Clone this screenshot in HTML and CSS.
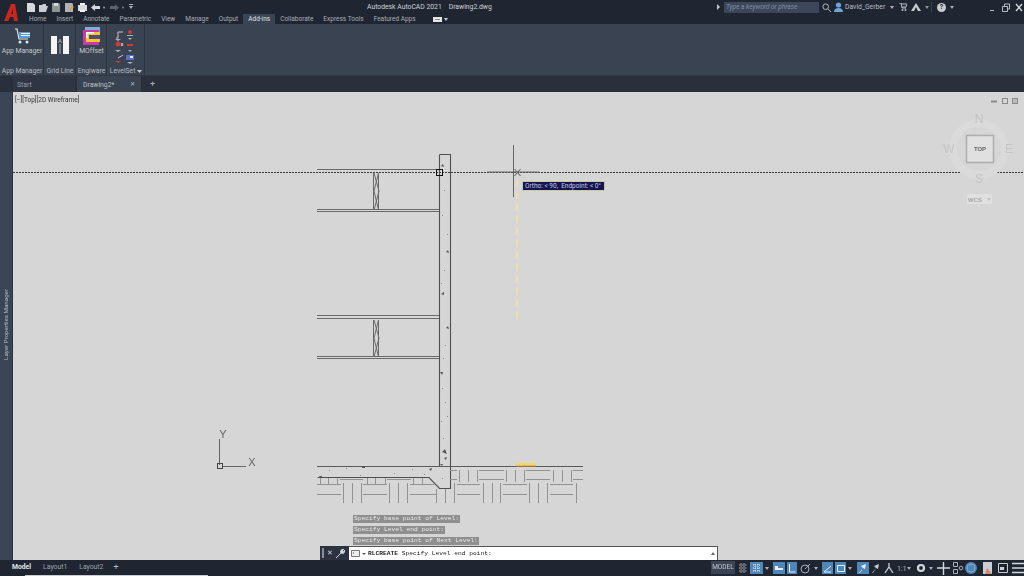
FILE: index.html
```html
<!DOCTYPE html>
<html lang="en">
<head>
<meta charset="utf-8">
<title>Autodesk AutoCAD 2021 - Drawing2.dwg</title>
<link rel="stylesheet" href="styles.css">
</head>
<body>
<div class="app">
  <header class="top">
    <div class="logo"><svg width="14" height="18" viewBox="0 0 14 18"><path d="M0 18 7 1h4l3 17h-4l-.6-4H6l-1.700 4zM7.200 11h1.800L8.500 6z" fill="#c8281e" fill-rule="evenodd"/></svg></div>
    <div class="top-rows">
      <div class="titlerow">
        <div class="qat">
          <svg width="108" height="11" viewBox="0 0 108 11">
            <path d="M0 1h6l2 2v7H0z" fill="#d5d8dc"/>
            <path d="M12 3h3l1-1h3v2h2l-2 6h-7z" fill="#c9ccd0"/>
            <path d="M25 1h7l1 1v8h-8z" fill="#8f949b"/><path d="M27 1h4v3h-4z" fill="#d5d8dc"/>
            <path d="M38 1h7l1 1v8h-8z" fill="#aeb2b7"/><path d="M42 7l4-3 1 1-4 4z" fill="#e0a030"/>
            <path d="M51 3h9v6h-9z" fill="#d5d8dc"/><path d="M53 1h5v2h-5zM53 8h5v2h-5z" fill="#f2f2f2"/>
            <path d="M64 5.500l4-3.500v2h5v3h-5v2z" fill="#d5d8dc"/>
            <circle cx="77" cy="5.500" r="1" fill="#9aa0a8"/>
            <path d="M92 5.500l-4-3.500v2h-5v3h5v2z" fill="#59616d"/>
            <circle cx="96" cy="5.500" r="1" fill="#7a818c"/>
            <path d="M102 2h4v1h-4zM102 4h4l-2 3z" fill="#aeb2b7"/>
          </svg>
        </div>
        <div class="apptitle"><span>Autodesk AutoCAD 2021</span><span>Drawing2.dwg</span></div>
        <div class="toolsright">
          <svg class="sarrow" width="4" height="6" viewBox="0 0 4 6"><path d="M0 0l3 3-3 3z" fill="#c6cad0"/></svg>
          <div class="search">Type a keyword or phrase</div>
          <svg class="ic-s" width="9" height="9" viewBox="0 0 9 9"><circle cx="3.700" cy="3.700" r="2.800" fill="none" stroke="#b7bcc3"/><path d="M6 6l3 3" stroke="#b7bcc3"/></svg>
          <svg class="ic-u" width="9" height="10" viewBox="0 0 9 10"><circle cx="4.500" cy="3" r="2.600" fill="#6ea5da"/><path d="M0 10c0-3 2-4 4.500-4S9 7 9 10z" fill="#6ea5da"/></svg>
          <span class="user">David_Gerber</span>
          <svg class="caret1" width="4" height="3" viewBox="0 0 4 3"><path d="M0 0h4L2 3z" fill="#aab0b8"/></svg>
          <svg class="ic-c" width="8" height="8" viewBox="0 0 8 8"><path d="M0 0h2l1 5h4M2 1h6l-1 3H3" fill="none" stroke="#b7bcc3"/><circle cx="3.500" cy="7" r="1" fill="#b7bcc3"/><circle cx="6.500" cy="7" r="1" fill="#b7bcc3"/></svg>
          <svg class="ic-a" width="10" height="8" viewBox="0 0 10 8"><path d="M5 0l5 8H7L5 4 3 8H0z" fill="#c9ccd0"/></svg>
          <svg class="caret2" width="4" height="3" viewBox="0 0 4 3"><path d="M0 0h4L2 3z" fill="#8f959d"/></svg>
          <i class="sep"></i>
          <div class="help">?</div>
          <svg class="caret3" width="4" height="3" viewBox="0 0 4 3"><path d="M0 0h4L2 3z" fill="#aab0b8"/></svg>
          <svg class="win" width="34" height="9" viewBox="0 0 34 9"><path d="M0 7.500h4" stroke="#b7bcc3"/><path d="M12.500 3.500h5v5h-5zM14.500 3V1h5v5H18" fill="none" stroke="#b7bcc3"/><path d="M26 1l6 7M32 1l-6 7" stroke="#d5d8dc" stroke-width="1.300"/></svg>
        </div>
      </div>
      <nav class="tabs">
        <span class="tab">Home</span><span class="tab">Insert</span><span class="tab">Annotate</span><span class="tab">Parametric</span><span class="tab">View</span><span class="tab">Manage</span><span class="tab">Output</span><span class="tab active">Add-ins</span><span class="tab">Collaborate</span><span class="tab">Express Tools</span><span class="tab">Featured Apps</span>
        <span class="tabicon"><svg width="15" height="5" viewBox="0 0 15 5"><path d="M0 0h9v5H0z" fill="#e4e6e8"/><path d="M2 2h5v1H2z" fill="#8f959d"/><path d="M11 1h4l-2 3z" fill="#c9ccd0"/></svg></span>
      </nav>
    </div>
  </header>

  <section class="ribbon">
    <div class="panel p-app">
      <div class="panel-body">
        <svg width="17" height="17" viewBox="0 0 17 17"><path d="M1 1h2l2 10h9" fill="none" stroke="#e4e6e8" stroke-width="1.200"/><circle cx="6" cy="14" r="1.500" fill="#e4e6e8"/><circle cx="13" cy="14" r="1.500" fill="#e4e6e8"/><path d="M5 4h11v6H5z" fill="#5b9bd0"/><path d="M7 5h9v1H7zM7 7h9v1H7z" fill="#e8f1f7"/></svg>
        <span class="big">App Manager</span>
      </div>
      <span class="ptitle">App Manager</span>
    </div>
    <div class="panel p-grid">
      <div class="panel-body">
        <svg class="gridicon" width="18" height="18" viewBox="0 0 18 18"><path d="M0 0h6v18H0zM12 0h6v18h-6z" fill="#f4f4f4"/><path d="M9 8v10" stroke="#aab0b8"/><text x="9" y="7" text-anchor="middle" class="glyph">A</text></svg>
      </div>
      <span class="ptitle">Grid Line</span>
    </div>
    <div class="panel p-eng">
      <div class="panel-body">
        <svg width="19" height="18" viewBox="0 0 19 18"><path d="M3 0h15v5H3z" fill="#7fb0dc"/><path d="M1 3h16v15H1z" fill="#c83aa8"/><path d="M4 5h14v3H7v4h11v3H4z" fill="#f0c92e"/><path d="M7 8h11v4H7z" fill="#5a4a78"/><path d="M4 5h8v1.500H5.500V11H4z" fill="#fff"/></svg>
        <span class="big">MOffset</span>
      </div>
      <span class="ptitle">Engiware</span>
    </div>
    <div class="panel p-lev">
      <div class="levels">
        <svg width="22" height="36" viewBox="0 0 22 36">
          <g fill="none" stroke="#c4c8ce"><path d="M3 3h5M3 3v6h-2"/><path d="M3 29l5-3"/></g>
          <path d="M0 10h6l-3 2z" fill="#aab0b8"/>
          <circle cx="15" cy="3" r="2" fill="#d23a30"/><path d="M12 6h6v1h-6zM13 9h4l-2 2z" fill="#aab0b8"/>
          <circle cx="3" cy="15" r="2.500" fill="#d23a30"/><path d="M6 14l2 3M8 14l-2 3" stroke="#c4c8ce"/><path d="M0 21h6l-3 2z" fill="#aab0b8"/>
          <path d="M12 15h6v2h-6z" fill="#d23a30"/><path d="M13 21h4l-2 2z" fill="#aab0b8"/>
          <path d="M0 32h6l-3 2z" fill="#d23a30"/>
          <path d="M11 26h8v5h-8z" fill="#5b6fc8"/><path d="M15 27h3v2h-3z" fill="#e8edf5"/><path d="M12 33h6l-3 2z" fill="#aab0b8"/>
        </svg>
      </div>
      <span class="ptitle">LevelSet <svg width="5" height="3" viewBox="0 0 5 3"><path d="M0 0h5L2.500 3z" fill="#c6cad0"/></svg></span>
    </div>
  </section>

  <div class="doctabs">
    <span class="doc">Start</span>
    <span class="doc current">Drawing2*<b>✕</b></span>
    <span class="plus">+</span>
  </div>

  <main class="work">
    <aside class="palette"><span>Layer Properties Manager</span></aside>
    <div class="canvas">
      <svg class="drawing" width="1011" height="468" viewBox="13 92 1011 468">
        <!-- wall -->
        <g fill="none" stroke="#4f4f4f" stroke-width="1.100">
          <path d="M439.500 154.500h11V488.500h-11L429 477.500H317.500"/>
          <path d="M439.500 154.500V466"/>
          <path d="M317 466.500h266" stroke="#5a5a5a"/>
        </g>
        <!-- floors -->
        <g fill="none" stroke="#6a6a6a" stroke-width="1.200">
          <path d="M317 169.500h122M317 209.500h122M317 211.500h122M317 315.500h122M317 318.500h122M317 356.500h122M317 358.500h122"/>
          <path d="M373.500 173v37M378.500 173v37M374 173l5 18-5 19M378.500 173l-4.500 18 4.500 19" stroke-width="1"/>
          <path d="M373.500 320v37M378.500 320v37M374 320l5 18-5 19M378.500 320l-4.500 18 4.500 19" stroke-width="1"/>
        </g>
        <!-- concrete marks -->
        <g fill="#555">
          <path d="M441 166l2-2 1 3zM446 252l2-2 1 3zM441 294l3-2v3zM446 328l2-2 1 3zM440 372l3 0-1 3zM442 452l3-3 2 5zM444 458l3-1-1 3z"/>
          <path d="M362 466h3v2h-3zM429 469l3-1-1 3zM319 476l3 0-1 3zM440 464l3 0-1 2z"/>
        </g>
        <g fill="#8a8a8a">
          <path d="M444 190h1v1h-1zM442 215h1v1h-1zM447 234h1v1h-1zM444 270h1v1h-1zM441 283h1v1h-1zM445 345h1v1h-1zM443 358h1v1h-1zM442 388h1v1h-1zM445 402h1v1h-1zM441 421h1v1h-1zM447 416h1v1h-1zM443 438h1v1h-1zM346 468h1v1h-1zM329 470h1v1h-1zM394 473h1v1h-1zM412 469h1v1h-1zM424 474h1v1h-1zM360 475h1v1h-1zM442 478h1v1h-1zM433 484h1v1h-1z"/>
        </g>
        <!-- hatch -->
        <g fill="none" stroke="#929292" stroke-width="1">
          <path d="M459.500 470v12M468.500 470v12M477.500 470v12M506.500 470v12M515.500 470v12M524.500 470v12M553.500 470v12M562.500 470v12M571.500 470v12"/>
          <path d="M450 470.500h7M479 470.500h25M526 470.500h24M573 470.500h10M450 479.500h7M479 479.500h25M526 479.500h24M573 479.500h10"/>
          <path d="M320.500 478v6M328.500 478v6M337.500 478v6M367.500 478v6M375.500 478v6M385.500 478v6M413.500 478v6M422.500 478v6"/>
          <path d="M340 479.500h23M387 479.500h24"/>
          <path d="M317 484.500h24M363 484.500h24M410 484.500h24M457 484.500h23M503 484.500h24M550 484.500h23M317 494.500h24M363 494.500h24M410 494.500h26M457 494.500h23M503 494.500h24M550 494.500h23"/>
          <path d="M343.500 483v20M352.500 483v20M361.500 483v20M389.500 483v20M398.500 483v20M407.500 483v20M436.500 489v14M445.500 489v14M454.500 483v20M483.500 483v20M492.500 483v20M500.500 483v20M529.500 483v20M538.500 483v20M547.500 483v20M576.500 483v20"/>
        </g>
        <!-- highlight -->
        <path d="M516 463h20v2.500h-20z" fill="#eedc5a"/><path d="M516 466h20" stroke="#e58a4a"/>
        <!-- crosshair guide -->
        <path d="M13 172.500h1011" stroke="#3a3a3a" stroke-dasharray="2 1"/>
        <path d="M487 172h52M513.500 145v52" stroke="#666"/>
        <path d="M514.500 169l6 7M520.500 169l-6 7" stroke="#555"/>
        <rect x="436.500" y="169.500" width="6" height="6" fill="none" stroke="#111"/>
        <path d="M517 179v142" stroke="#eadfa8" stroke-width="2" stroke-dasharray="8 4"/>
        <!-- UCS -->
        <path d="M219.500 439v26M222 466.500h24" stroke="#666"/>
        <rect x="217.500" y="463.500" width="5" height="5" fill="none" stroke="#444"/>
        <text x="223" y="438" class="ucs">Y</text>
        <text x="252" y="466" class="ucs">X</text>
        <!-- compass -->
        <circle cx="979" cy="149" r="26" fill="none" stroke="#dadada" stroke-width="8"/>
        <rect x="966.500" y="135.500" width="27" height="27" fill="#e0e0e0" stroke="#adadad" stroke-width="1.500"/>
        <text x="980" y="151" class="top-t">TOP</text>
        <text x="979" y="123" class="cmp">N</text><text x="949" y="153" class="cmp">W</text><text x="1009" y="153" class="cmp">E</text><text x="979" y="183" class="cmp">S</text>
        <rect x="967" y="194" width="25" height="10" rx="1" fill="#e0e0e0"/>
        <text x="975" y="202" class="wcs">WCS</text><path d="M987 198h4l-2 3z" fill="#c0c0c0"/>
        <!-- viewport controls -->
        <path d="M991 101.500h6" stroke="#8a8a8a" stroke-width="2"/><rect x="1002.500" y="98.500" width="5" height="5" fill="none" stroke="#8a8a8a"/><rect x="1012.500" y="98.500" width="5" height="5" fill="#bcbcbc" stroke="#8a8a8a"/>
      </svg>
      <div class="vplabel">[−][Top][2D Wireframe]</div>
      <div class="tip">Ortho: &lt; 90,&nbsp; Endpoint: &lt; 0°</div>
      <div class="cmdblock">
        <div class="history">
          <span>Specify base point of Level:</span>
          <span>Specify Level end point:</span>
          <span>Specify base point of Next Level:</span>
        </div>
        <div class="cmdline">
          <div class="grip"><i></i><b>✕</b><svg width="9" height="9" viewBox="0 0 9 9"><path d="M0 9l5-5M5 4c-1-2 0-4 3-4L6 2l1 1 2-2c0 3-2 4-4 3z" stroke="#d5d8dc" fill="#d5d8dc"/></svg></div>
          <div class="input">
            <svg width="9" height="7" viewBox="0 0 9 7"><path d="M.5.500h8v6h-8z" fill="#eee" stroke="#777"/><path d="M2 2l1 1-1 1" stroke="#555" fill="none" stroke-width=".6"/></svg>
            <svg class="c" width="4" height="2" viewBox="0 0 4 2"><path d="M0 0h4L2 2z" fill="#555"/></svg>
            <span><b>RLCREATE</b> Specify Level end point:</span>
            <svg class="up" width="4" height="3" viewBox="0 0 4 3"><path d="M0 3h4L2 0z" fill="#666"/></svg>
          </div>
        </div>
      </div>
    </div>
  </main>

  <footer class="status">
    <div class="layouts"><span class="lt on">Model</span><span class="lt">Layout1</span><span class="lt">Layout2</span><span class="lt add">+</span></div>
    <i class="scrub"></i>
    <div class="sright">
      <span class="model">MODEL</span>
      <svg width="313" height="16" viewBox="711 560 313 16">
        <path d="M739 565h8M739 568h8M739 571h8M741 563v10M744 563v10" stroke="#aab0b8" stroke-dasharray="1 .5" fill="none"/>
        <g fill="#4f87b8"><path d="M750 562h13v12h-13zM773 562h12v12h-12zM787 562h10v12h-10zM822 562h11v12h-11zM835 562h11v12h-11zM857 562h12v12h-12z"/><circle cx="971" cy="568" r="6"/></g>
        <path d="M753 565h7M753 568h7M753 571h7M755 564v8M758 564v8" stroke="#e8f1f7" stroke-dasharray="1 1"/>
        <path d="M775 566h3v2h5v2h-8z" fill="#e8f1f7"/><path d="M789.500 564v8h6" stroke="#e8f1f7" fill="none"/><path d="M824 572l7-6M824 572h7" stroke="#e8f1f7" fill="none"/>
        <path d="M837.500 565.500h7v6h-7z" fill="none" stroke="#e8f1f7"/>
        <circle cx="805" cy="569" r="4" fill="none" stroke="#aab0b8"/><path d="M805 569l5-5" stroke="#aab0b8"/>
        <path d="M859 573l4-5-2-2 5-2-1 5-2-1-3 5z" fill="#e8f1f7"/>
        <path d="M872 573l4-5-2-2 5-2-1 5-2-1-3 5z" fill="#c9ccd0"/><path d="M889 563v4M885 573l4-6 4 6" stroke="#c9ccd0" fill="none" stroke-width="1.300"/>
        <g fill="#aab0b8"><path d="M765 567h4l-2 3zM814 567h4l-2 3zM848 567h4l-2 3zM907 567h4l-2 3zM929 567h4l-2 3z"/></g>
        <text x="897" y="571" class="st">1:1</text>
        <circle cx="921" cy="568" r="3" fill="none" stroke="#d5d8dc" stroke-width="2.200"/>
        <path d="M937 568h13M943.500 562v13" stroke="#d5d8dc" stroke-width="1.400"/>
        <path d="M953.500 562.500h4v4h-4zM953.500 569.500h4v4h-4z" fill="none" stroke="#aab0b8"/><circle cx="961" cy="568" r="1.800" fill="none" stroke="#aab0b8"/>
        <circle cx="971" cy="568" r="4" fill="none" stroke="#86a9c8"/>
        <path d="M983 562h9v12h-9z" fill="#c9ccd0"/><path d="M987 568l5 6h-7z" fill="#d08a70"/>
        <path d="M998.500 563.500h9v9h-9z" fill="none" stroke="#c9ccd0"/><path d="M1000 567h4v3h-4z" fill="#c9ccd0"/>
        <path d="M1012 563.500h12M1012 568h12M1012 572.500h12" stroke="#d5d8dc" stroke-width="1.300"/>
      </svg>
    </div>
  </footer>
</div>
</body>
</html>
```

FILE: styles.css
```css
* { box-sizing: border-box; }
html, body { margin: 0; padding: 0; height: 100%; overflow: hidden; }
body { font-family: Roboto, "Liberation Sans", Arial, sans-serif; font-size: 6.800px; color: #c6cad0; background: #1f2633; }
.app { width: 1024px; height: 576px; display: flex; flex-direction: column; position: relative; overflow: hidden; filter: blur(.3px); }

.top { height: 24px; display: flex; background: #1f2632; flex: none; }
.logo { width: 24px; padding: 3px 0 0 4px; flex: none; }
.top-rows { flex: 1; display: flex; flex-direction: column; }
.titlerow { height: 14px; display: flex; align-items: center; position: relative; }
.qat { width: 340px; flex: none; display: flex; margin-left: 3px; }
.apptitle { width: 350px; flex: none; display: flex; gap: 7px; color: #d0d3d8; font-size: 6.800px; }
.toolsright { display: flex; align-items: center; flex: 1; }
.sarrow { margin-right: 3px; }
.search { width: 95px; height: 11px; background: #3c4759; color: #7d8ea6; font-style: italic; font-size: 6.500px; line-height: 11px; padding-left: 2px; }
.ic-s { margin-left: 3px; }
.ic-u { margin-left: 3px; }
.user { margin-left: 2px; width: 42px; color: #b9bec5; white-space: nowrap; }
.caret1 { margin-left: 3px; }
.ic-c { margin-left: 5px; }
.ic-a { margin-left: 4px; }
.caret2 { margin-left: 4px; }
.sep { width: 1px; height: 10px; background: #39414f; margin-left: 2px; }
.help { width: 9px; height: 9px; border-radius: 50%; background: #c9ccd0; color: #1f2632; font-size: 7px; line-height: 9px; text-align: center; font-weight: bold; margin-left: 5px; }
.caret3 { margin-left: 4px; }
.win { margin-left: 36px; }

.tabs { height: 10px; display: flex; align-items: stretch; }
.tab { padding: 0 5px; line-height: 10px; color: #a9aeb6; white-space: nowrap; font-size: 6.500px; }
.tab.active { background: #3b4454; color: #dfe2e6; }
.tabicon { margin-left: 12px; display: flex; align-items: center; }

.ribbon { height: 52px; flex: none; background: #3a4352; display: flex; gap: 1px; padding-left: 1px; border-bottom: 1px solid #2f3744; }
.panel { display: flex; flex-direction: column; align-items: center; border-right: 1px solid #2d3440; }
.panel-body { flex: 1; min-height: 0; display: flex; flex-direction: column; align-items: center; padding-top: 4px; }
.p-app { width: 43px; }
.p-grid { width: 31px; }
.p-grid .panel-body { padding-top: 12px; }
.p-eng { width: 30px; }
.p-eng .panel-body { padding-top: 3px; }
.p-lev { width: 37px; }
.levels { flex: 1; min-height: 0; padding-top: 5px; }
.big { color: #c6cad0; font-size: 6.800px; margin-top: 2px; white-space: nowrap; }
.ptitle { color: #b5bac1; font-size: 6.800px; line-height: 8px; white-space: nowrap; }
.glyph { font: 6px Roboto, sans-serif; fill: #c6cad0; }

.doctabs { height: 16px; flex: none; background: #292f3b; display: flex; align-items: stretch; padding-left: 13px; gap: 2px; }
.doc { width: 62px; padding-left: 4px; line-height: 18px; color: #989ea7; background: #2f3643; font-size: 6.800px; }
.doc.current { width: 64px; padding-left: 6px; background: #3a4352; color: #bcc1c8; display: flex; justify-content: space-between; padding-right: 6px; }
.doc b { font-weight: normal; font-size: 6px; line-height: 16px; }
.plus { margin-left: 7px; line-height: 16px; color: #aab0b8; font-size: 9px; }

.work { flex: 1; display: flex; min-height: 0; }
.palette { width: 13px; flex: none; background: #3a4556; border-right: 1px solid #2b3340; display: flex; align-items: center; justify-content: center; }
.palette span { writing-mode: vertical-rl; transform: rotate(180deg); color: #b5bac1; font-size: 6.200px; white-space: nowrap; position: relative; top: -2px; }
.canvas { flex: 1; background: #d6d6d6; position: relative; overflow: hidden; }
.drawing { display: block; }
.vplabel { position: absolute; left: 2px; top: 4px; font-size: 6.500px; color: #333; }
.ucs { font: 11px "Liberation Sans", sans-serif; fill: #666; text-anchor: middle; }
.top-t { font: bold 6px "Liberation Sans", sans-serif; fill: #666; text-anchor: middle; }
.cmp { font: 12px "Liberation Sans", sans-serif; fill: #c4c4c4; text-anchor: middle; }
.wcs { font: bold 6px "Liberation Sans", sans-serif; fill: #a6a6a6; text-anchor: middle; }
.tip { position: absolute; left: 509px; top: 89px; width: 83px; height: 10px; background: #14164f; border: 1px solid #c9c9a8; color: #c6c9e0; font-size: 6.500px; line-height: 8px; padding-left: 2px; white-space: nowrap; }

.cmdblock { position: absolute; left: 307px; bottom: 0; width: 398px; }
.history { display: flex; flex-direction: column; align-items: flex-start; gap: 3px; padding: 0 0 1px 33px; }
.history span { height: 8px; line-height: 8px; background: #8f8f8f; color: #eaeaea; font: 6.250px/8px "Liberation Mono", monospace; padding: 0 1px; white-space: pre; }
.cmdline { height: 14px; display: flex; background: #2b3240; }
.grip { width: 29px; display: flex; align-items: center; gap: 3px; padding-left: 2px; color: #d5d8dc; }
.grip i { width: 2px; height: 10px; background: #8a909a; }
.grip b { font-weight: normal; font-size: 7px; }
.input { flex: 1; background: #fff; display: flex; align-items: center; padding: 0 2px 0 2px; border: 1px solid #555; border-left: 0; border-bottom: 0; }
.input .c { margin: 0 2px 0 2px; }
.input span { flex: 1; color: #222; font: 6.250px "Liberation Mono", monospace; white-space: pre; }

.status { height: 16px; flex: none; background: #1f2632; display: flex; position: relative; }
.layouts { display: flex; padding: 1px 0 0 12px; }
.lt { line-height: 12px; color: #9da3ac; font-size: 6.800px; margin-right: 12px; white-space: nowrap; }
.lt.on { color: #e3e5e8; font-weight: bold; margin-right: 12px; }
.lt.add { margin-left: -2px; color: #b5bac1; font-size: 9px; }
.scrub { position: absolute; left: 25px; width: 183px; bottom: 0; height: 1px; background: #c9ccd0; }
.sright { margin-left: auto; display: flex; width: 313px; position: relative; }
.model { position: absolute; left: 0; top: 1px; width: 24px; height: 13px; background: #3a4352; color: #c6cad0; font-size: 6.500px; line-height: 13px; text-align: center; }
.sright svg { display: block; }
.st { font: 7px Roboto, sans-serif; fill: #b5bac1; }
```
